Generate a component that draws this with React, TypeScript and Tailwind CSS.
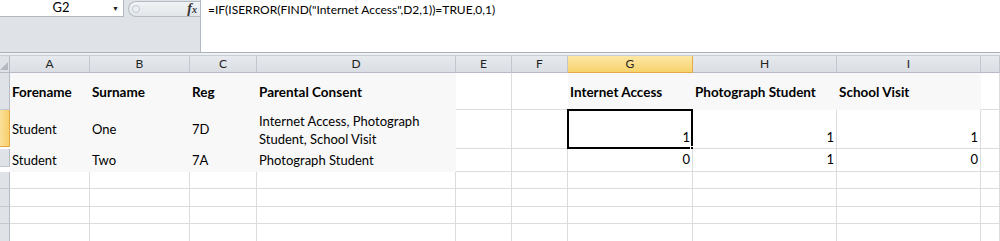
import type { ReactNode } from "react";

const COLS = ["A", "B", "C", "D", "E", "F", "G", "H", "I", ""];
const ROW_HEIGHTS = [37, 37, 18, 17, 18, 17, 18, 17];

type CellData = { text?: ReactNode; bold?: boolean; num?: boolean };

const DATA: Record<string, CellData> = {
  "0-0": { text: "Forename", bold: true },
  "0-1": { text: "Surname", bold: true },
  "0-2": { text: "Reg", bold: true },
  "0-3": { text: "Parental Consent", bold: true },
  "0-6": { text: "Internet Access", bold: true },
  "0-7": { text: "Photograph Student", bold: true },
  "0-8": { text: "School Visit", bold: true },
  "1-0": { text: "Student" },
  "1-1": { text: "One" },
  "1-2": { text: "7D" },
  "1-3": {
    text: (
      <span className="leading-[18px]">
        Internet Access, Photograph
        <br />
        Student, School Visit
      </span>
    ),
  },
  "1-6": { text: "1", num: true },
  "1-7": { text: "1", num: true },
  "1-8": { text: "1", num: true },
  "2-0": { text: "Student" },
  "2-1": { text: "Two" },
  "2-2": { text: "7A" },
  "2-3": { text: "Photograph Student" },
  "2-6": { text: "0", num: true },
  "2-7": { text: "1", num: true },
  "2-8": { text: "0", num: true },
};

function filled(r: number, c: number) {
  if (r >= 0 && r <= 2 && c >= 0 && c <= 3) return true;
  if (r === 0 && c >= 6 && c <= 8) return true;
  return false;
}

function Cell({ r, c }: { r: number; c: number }) {
  const d = DATA[`${r}-${c}`];
  const f = filled(r, c);
  const showRight = !f && !filled(r, c + 1);
  const showBottom = !f && !filled(r + 1, c);
  const selected = r === 1 && c === 6;
  return (
    <div
      className={[
        "relative flex overflow-visible whitespace-nowrap border-r border-b px-[2px]",
        f ? "bg-[#f8f8f8]" : "bg-white",
        showRight ? "border-r-[#dadcdd]" : f ? "border-r-[#f8f8f8]" : "border-r-white",
        showBottom ? "border-b-[#dadcdd]" : f ? "border-b-[#f8f8f8]" : "border-b-white",
        d?.num ? "items-end justify-end pb-[1px] pr-[2px]" : "items-center pt-[2px]",
        d?.bold ? "text-[13.5px] font-bold" : "",
      ].join(" ")}
    >
      {d?.text}
      {selected && (
        <>
          <div className="pointer-events-none absolute -left-[1px] -top-[1px] -right-[1px] -bottom-[1px] border-2 border-black" />
          <div className="absolute -right-[3px] -bottom-[3px] h-[5px] w-[5px] border border-white bg-black" />
        </>
      )}
    </div>
  );
}

export default function App() {
  return (
    <div className="h-[241px] w-[1000px] overflow-hidden bg-white font-['Lato','Open_Sans',sans-serif] text-[13px] text-black">
      {/* formula bar */}
      <div className="flex h-[53px] border-b border-[#a9b2bd]">
        <div className="flex w-[200px] flex-col bg-[#dfe3e8]">
          <div className="flex h-[17px] items-stretch">
            <div className="flex w-[124px] items-center border-b border-r border-[#b2b9c3] bg-white">
              <span className="flex-1 pl-[10px] text-center text-[13px]">G2</span>
              <span className="pr-[4px] text-[7px] text-[#222]">▼</span>
            </div>
            <div className="ml-[4px] mt-[1px] flex flex-1 items-center rounded-l-full border border-r-0 border-[#b4bbc4] bg-gradient-to-b from-[#f1f3f5] to-[#e2e6ea]">
              <span className="ml-[3px] h-[8px] w-[8px] rounded-full border border-[#c2c8cf] bg-[#eceff2]" />
              <span className="ml-auto mr-[3px] font-['Liberation_Serif',serif] text-[14px] font-bold italic leading-none text-[#333]">
                f<span className="text-[10px]">x</span>
              </span>
            </div>
          </div>
        </div>
        <div className="flex-1 border-l border-[#b2b9c3] bg-white pl-[7px] pt-[1px] text-[12px] leading-[17px]">
          =IF(ISERROR(FIND("Internet Access",D2,1))=TRUE,0,1)
        </div>
      </div>
      <div className="h-[3px] border-b border-[#c9ced5] bg-[#eef0f3]" />

      {/* sheet */}
      <div className="grid grid-cols-[10px_80px_100px_67px_199px_56px_56px_125px_144px_144px_19px]">
        <div className="flex h-[17px] items-end justify-end overflow-hidden border-r border-b border-[#b7bcc4] bg-[#dfe3e8]">
          <div className="mb-[2px] mr-[1px] h-0 w-0 border-b-[8px] border-l-[8px] border-b-[#b5b9bf] border-l-transparent" />
        </div>
        {COLS.map((col, i) => (
          <div
            key={i}
            className={[
              "flex h-[17px] items-center justify-center border-r border-b text-[12px] text-[#222]",
              col === "G"
                ? "border-r-[#e3a94a] border-b-[#e3a94a] bg-gradient-to-b from-[#fde7a4] to-[#f8d36c]"
                : "border-r-[#c3c8cf] border-b-[#b7bcc4] bg-gradient-to-b from-[#e6e9ed] to-[#dadee4]",
            ].join(" ")}
          >
            {col}
          </div>
        ))}

        {ROW_HEIGHTS.map((h, r) => (
          <div key={r} className="contents">
            <div
              style={{ height: h }}
              className={[
                "flex items-center overflow-hidden border-r border-b text-[11px] text-[#3a6aa6]",
                r === 1
                  ? "border-r-[#e3a94a] border-b-[#e3a94a] bg-gradient-to-r from-[#fbe09b] to-[#f7cf67]"
                  : "border-r-[#b7bcc4] border-b-[#c3c8cf] bg-[#dfe3e8]",
              ].join(" ")}
            >
              <span className="-ml-[14px] w-[22px] shrink-0 text-center">{r + 1}</span>
            </div>
            {COLS.map((_, c) => (
              <Cell key={c} r={r} c={c} />
            ))}
          </div>
        ))}
      </div>
    </div>
  );
}
